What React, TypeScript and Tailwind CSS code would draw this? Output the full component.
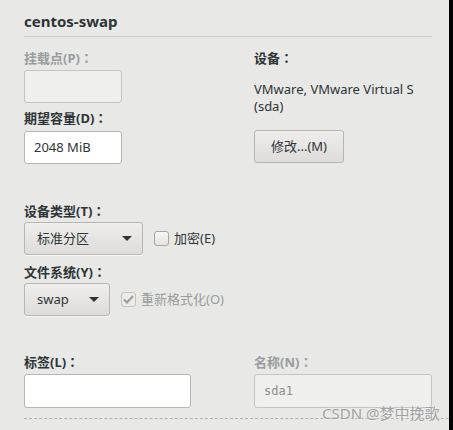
import React from "react";

const font = { fontFamily: '"Noto Sans", "Noto Sans CJK SC", sans-serif' };

// full-width colon, centred like in the GTK dialog
function Colon() {
  return <span style={{ fontFamily: '"Noto Sans CJK JP", sans-serif' }}>：</span>;
}

function Caret() {
  return (
    <svg width="10" height="6" viewBox="0 0 10 6" className="shrink-0">
      <path d="M0 0 L10 0 L5 5 Z" fill="#2e3436" />
    </svg>
  );
}

function Dropdown({ value, width }: { value: string; width: string }) {
  return (
    <div
      className={`${width} h-[33px] flex items-center justify-between pl-3 pr-[10px] rounded-[3px] border border-[#b6b6b3] bg-gradient-to-b from-[#efeeec] to-[#dddcda] text-[13px] text-[#2e3436] shadow-[0_1px_0_rgba(255,255,255,0.6)]`}
    >
      <span>{value}</span>
      <Caret />
    </div>
  );
}

function Check({ checked, disabled, label }: { checked?: boolean; disabled?: boolean; label: string }) {
  return (
    <div className="flex items-center gap-[5px]">
      <div
        className={`w-[15px] h-[15px] rounded-[3px] border flex items-center justify-center ${
          disabled ? "border-[#c3c3c0] bg-[#ecebea]" : "border-[#a5a5a2] bg-gradient-to-b from-[#f7f7f6] to-[#e4e3e1]"
        }`}
      >
        {checked && (
          <svg width="11" height="9" viewBox="0 0 11 9">
            <path d="M1 4.5 L4 7.5 L10 1" fill="none" stroke={disabled ? "#9a9c9c" : "#2e3436"} strokeWidth="2" />
          </svg>
        )}
      </div>
      <span className={`text-[13px] ${disabled ? "text-[#9a9c9c]" : "text-[#2e3436]"}`}>{label}</span>
    </div>
  );
}

export default function App() {
  return (
    <div className="w-[453px] h-[430px] flex bg-[#e8e8e7] relative overflow-hidden" style={font}>
      <div className="flex-1 pl-6 flex flex-col">
        {/* header */}
        <div className="mr-[17px] pt-[11px] pb-[5px] border-b border-[#cdcdca]">
          <div className="text-[15px] leading-[20px] font-bold text-[#2e3436]">centos-swap</div>
        </div>

        {/* mount point / size + device */}
        <div className="flex mt-[12px]">
          <div className="w-[230px] flex flex-col">
            <div className="text-[13px] leading-[18px] font-bold text-[#9a9c9c]">挂载点(P)<Colon /></div>
            <div className="mt-[3px] w-[98px] h-[33px] rounded-[3px] border border-[#c3c3c0] bg-[#efefee]" />
            <div className="mt-[6px] text-[13px] leading-[18px] font-bold text-[#2e3436]">期望容量(D)<Colon /></div>
            <div className="mt-[4px] w-[98px] h-[33px] rounded-[3px] border border-[#b6b6b3] bg-white flex items-center pl-[9px] text-[13px] text-[#2e3436]">
              2048 MiB
            </div>
          </div>
          <div className="flex flex-col">
            <div className="text-[13px] leading-[18px] font-bold text-[#2e3436]">设备<Colon /></div>
            <div className="mt-[14px] text-[13px] leading-[17px] text-[#2e3436]">
              VMware, VMware Virtual S
              <br />
              (sda)
            </div>
            <div className="mt-[15px] w-[90px] h-[33px] rounded-[3px] border border-[#b6b6b3] bg-gradient-to-b from-[#efeeec] to-[#dddcda] flex items-center justify-center text-[13px] text-[#2e3436]">
              修改...(M)
            </div>
          </div>
        </div>

        {/* device type */}
        <div className="mt-[38px] text-[13px] leading-[18px] font-bold text-[#2e3436]">设备类型(T)<Colon /></div>
        <div className="mt-[2px] flex items-center gap-[11px]">
          <Dropdown value="标准分区" width="w-[119px]" />
          <Check label="加密(E)" />
        </div>

        {/* file system */}
        <div className="mt-[8px] text-[13px] leading-[18px] font-bold text-[#2e3436]">文件系统(Y)<Colon /></div>
        <div className="mt-[2px] flex items-center gap-[11px]">
          <Dropdown value="swap" width="w-[86px]" />
          <Check label="重新格式化(O)" checked disabled />
        </div>

        {/* label / name */}
        <div className="flex mt-[37px]">
          <div className="w-[230px] flex flex-col">
            <div className="text-[13px] leading-[18px] font-bold text-[#2e3436]">标签(L)<Colon /></div>
            <div className="mt-[3px] w-[167px] h-[34px] rounded-[3px] border border-[#b6b6b3] bg-white" />
          </div>
          <div className="flex flex-col">
            <div className="text-[13px] leading-[18px] font-bold text-[#9a9c9c]">名称(N)<Colon /></div>
            <div className="mt-[3px] w-[178px] h-[34px] rounded-[3px] border border-[#c3c3c0] bg-[#efefee] flex items-center pl-[9px] text-[12px] text-[#8b8e8f]" style={{ fontFamily: '"DejaVu Sans Mono", monospace' }}>
              sda1
            </div>
          </div>
        </div>

        <div className="mt-[10px] border-t border-dashed border-[#b0b0ad]" />
      </div>
      <div className="w-[4px] bg-black" />

      <div className="absolute left-[322px] top-[403px] text-[15px] leading-[20px] text-[#a0a0a0] [text-shadow:0_0_2px_#fff]">
        CSDN @梦中挽歌
      </div>
    </div>
  );
}
